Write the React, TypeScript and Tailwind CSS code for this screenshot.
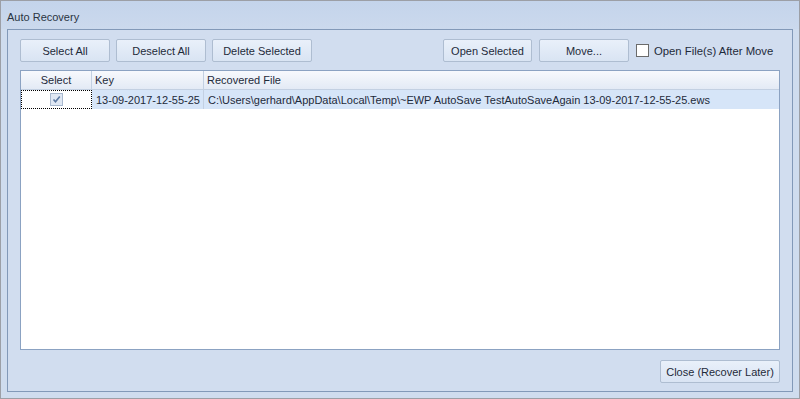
import React from "react";

const font = { fontFamily: '"Liberation Sans", Arial, sans-serif' };

function Btn({ w, children }: { w: string; children: React.ReactNode }) {
  return (
    <div
      className={`${w} h-[23px] flex items-center justify-center pt-[2px] rounded-[2px] border border-[#aebdd1] bg-gradient-to-b from-[#e9f0fa] to-[#d9e4f3] text-[11px] text-[#1e2a3a]`}
    >
      {children}
    </div>
  );
}

function Check({ checked, muted }: { checked?: boolean; muted?: boolean }) {
  return (
    <div
      className={`w-[13px] h-[13px] border flex items-center justify-center ${
        muted ? "border-[#a9b9cf] bg-[#dfe7f3]" : "border-[#6b6b6b] bg-white"
      }`}
    >
      {checked && (
        <svg width="9" height="9" viewBox="0 0 9 9">
          <path d="M1.5 4.5 L3.5 6.8 L7.8 1.5" stroke="#5d7aa3" strokeWidth="1.6" fill="none" />
        </svg>
      )}
    </div>
  );
}

export default function App() {
  return (
    <div
      style={font}
      className="w-[800px] h-[399px] border border-[#9c9fa6] bg-[#cfdcee] flex flex-col text-[#1e2a3a]"
    >
      <div className="h-[28px] shrink-0 flex items-center pl-[6px] pt-[5px] text-[11px] bg-gradient-to-b from-[#c4d4eb] to-[#cbd9ed] text-[#2a3442]">
        Auto Recovery
      </div>
      <div className="mx-[6px] h-[363px] border border-[#8299b8] bg-[#d1ddef] flex flex-col px-[12px] pt-[9px] pb-[8px]">
        <div className="flex items-center h-[23px]">
          <div className="flex gap-[6px]">
            <Btn w="w-[90px]">Select All</Btn>
            <Btn w="w-[90px]">Deselect All</Btn>
            <Btn w="w-[100px]">Delete Selected</Btn>
          </div>
          <div className="ml-auto flex items-center">
            <Btn w="w-[89px]">Open Selected</Btn>
            <div className="ml-[7px]">
              <Btn w="w-[90px]">Move...</Btn>
            </div>
            <div className="ml-[7px]">
              <Check />
            </div>
            <div className="ml-[5px] w-[126px] pt-[2px] text-[11.3px] whitespace-nowrap">Open File(s) After Move</div>
          </div>
        </div>
        <div className="mt-[8px] h-[280px] border border-[#8ba2c2] bg-white flex flex-col text-[11px]">
          <div className="h-[19px] flex border-b border-[#c3d0e2] bg-gradient-to-b from-[#f7f9fd] to-[#e3eaf5]">
            <div className="w-[71px] border-r border-[#c3d0e2] flex items-center justify-center pt-[1px]">Select</div>
            <div className="w-[112px] border-r border-[#c3d0e2] flex items-center pl-[3px] pt-[1px]">Key</div>
            <div className="flex-1 flex items-center pl-[3px] pt-[1px]">Recovered File</div>
          </div>
          <div className="h-[19px] flex bg-[#d6e5f8]">
            <div className="w-[71px] bg-white border border-dotted border-black flex items-center justify-center">
              <Check checked muted />
            </div>
            <div className="w-[112px] border-r border-[#c3d0e2] flex items-center pl-[4px] pt-[2px] whitespace-nowrap">
              13-09-2017-12-55-25
            </div>
            <div className="flex-1 flex items-center pl-[4px] pt-[2px] whitespace-nowrap">
              {"C:\\Users\\gerhard\\AppData\\Local\\Temp\\~EWP AutoSave TestAutoSaveAgain 13-09-2017-12-55-25.ews"}
            </div>
          </div>
        </div>
        <div className="mt-[10px] flex justify-end">
          <Btn w="w-[120px]">Close (Recover Later)</Btn>
        </div>
      </div>
    </div>
  );
}
